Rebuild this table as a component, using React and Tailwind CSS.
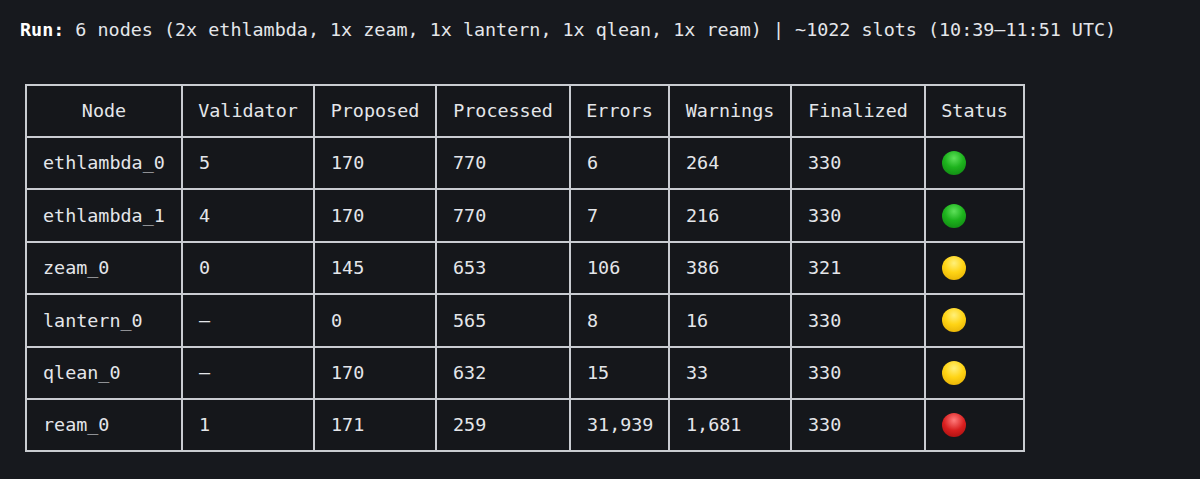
const rows = [
  { node: 'ethlambda_0', validator: '5', proposed: '170', processed: '770', errors: '6', warnings: '264', finalized: '330', status: 'green' },
  { node: 'ethlambda_1', validator: '4', proposed: '170', processed: '770', errors: '7', warnings: '216', finalized: '330', status: 'green' },
  { node: 'zeam_0', validator: '0', proposed: '145', processed: '653', errors: '106', warnings: '386', finalized: '321', status: 'yellow' },
  { node: 'lantern_0', validator: '—', proposed: '0', processed: '565', errors: '8', warnings: '16', finalized: '330', status: 'yellow' },
  { node: 'qlean_0', validator: '—', proposed: '170', processed: '632', errors: '15', warnings: '33', finalized: '330', status: 'yellow' },
  { node: 'ream_0', validator: '1', proposed: '171', processed: '259', errors: '31,939', warnings: '1,681', finalized: '330', status: 'red' },
]

const headers = ['Node', 'Validator', 'Proposed', 'Processed', 'Errors', 'Warnings', 'Finalized', 'Status']
const widths = [156, 132, 122, 134, 99, 122, 134, 99]

function Dot({ color }) {
  const styles = {
    green: 'bg-[radial-gradient(circle_at_50%_30%,#5ee05a_0%,#1db31d_45%,#0d7e10_100%)]',
    yellow: 'bg-[radial-gradient(circle_at_50%_30%,#fff07a_0%,#ffd415_45%,#e0a800_100%)]',
    red: 'bg-[radial-gradient(circle_at_50%_30%,#ff7b7b_0%,#d81f1f_50%,#9c0c0c_100%)]',
  }
  return <span className={`block w-[24px] h-[24px] rounded-full ${styles[color]}`}></span>
}

export default function App() {
  return (
    <div className="min-h-screen bg-[#17191e] text-[#e4e6ea] font-['DejaVu_Sans_Mono',monospace] text-[18.4px] pl-[20px] pt-[16px]">
      <p className="leading-[28px]">
        <span className="font-bold text-white">Run:</span> 6 nodes (2x ethlambda, 1x zeam, 1x lantern, 1x qlean, 1x ream) | ~1022 slots (10:39–11:51 UTC)
      </p>

      <table className="mt-[40px] ml-[5px] w-[998px] border-collapse table-fixed bg-[#15171b]">
        <colgroup>
          {widths.map((w, i) => (
            <col key={i} style={{ width: w }} />
          ))}
        </colgroup>
        <thead>
          <tr className="h-[52px]">
            {headers.map((h) => (
              <th key={h} className="border-2 border-[#c9ccd1] font-normal text-center px-[14px] whitespace-nowrap">
                {h}
              </th>
            ))}
          </tr>
        </thead>
        <tbody>
          {rows.map((r) => (
            <tr key={r.node} className="h-[52.4px]">
              <td className="border-2 border-[#c9ccd1] pl-[16px] whitespace-nowrap">{r.node}</td>
              <td className="border-2 border-[#c9ccd1] pl-[16px]">{r.validator}</td>
              <td className="border-2 border-[#c9ccd1] pl-[16px]">{r.proposed}</td>
              <td className="border-2 border-[#c9ccd1] pl-[16px]">{r.processed}</td>
              <td className="border-2 border-[#c9ccd1] pl-[16px] whitespace-nowrap">{r.errors}</td>
              <td className="border-2 border-[#c9ccd1] pl-[16px]">{r.warnings}</td>
              <td className="border-2 border-[#c9ccd1] pl-[16px]">{r.finalized}</td>
              <td className="border-2 border-[#c9ccd1] pl-[16px]">
                <Dot color={r.status} />
              </td>
            </tr>
          ))}
        </tbody>
      </table>
    </div>
  )
}
